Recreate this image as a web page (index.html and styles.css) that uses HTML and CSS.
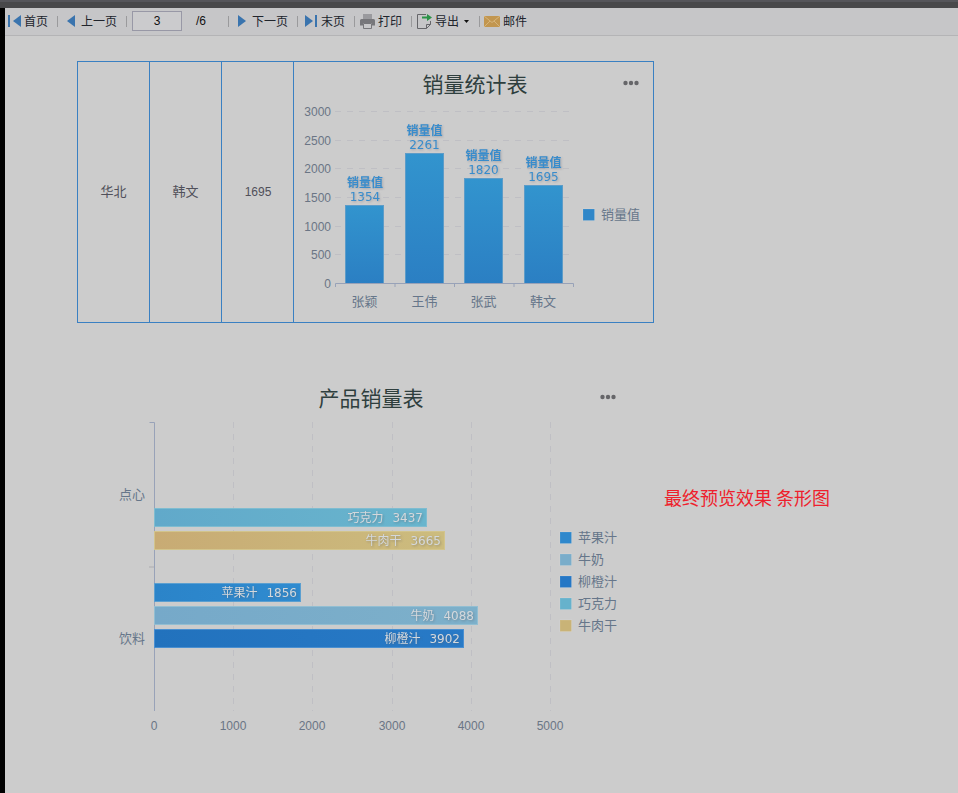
FILE: index.html
```html
<!DOCTYPE html>
<html lang="zh">
<head>
<meta charset="utf-8">
<title>报表预览</title>
<link rel="stylesheet" href="styles.css">
</head>
<body>
<div class="topbar"></div>
<div class="app">
  <div class="strip"></div>
  <div class="content">
    <div class="toolbar">
      <div class="tool">
        <svg width="13" height="12" viewBox="0 0 13 12"><rect class="i-blue" x="0" y="0" width="2" height="12"/><path class="i-blue" d="M13 0V12L5 6Z"/></svg>
        <span>首页</span>
      </div>
      <i class="sep"></i>
      <div class="tool g9 g6">
        <svg width="8" height="12" viewBox="0 0 8 12"><path class="i-blue" d="M8 0V12L0 6Z"/></svg>
        <span>上一页</span>
      </div>
      <i class="sep"></i>
      <input class="page-input" value="3">
      <span class="page-total">/6</span>
      <i class="sep"></i>
      <div class="tool g9 g6">
        <svg width="8" height="12" viewBox="0 0 8 12"><path class="i-blue" d="M0 0V12L8 6Z"/></svg>
        <span>下一页</span>
      </div>
      <i class="sep"></i>
      <div class="tool g7 g4">
        <svg width="12" height="12" viewBox="0 0 12 12"><path class="i-blue" d="M0 0V12L8 6Z"/><rect class="i-blue" x="10" y="0" width="2" height="12"/></svg>
        <span>末页</span>
      </div>
      <i class="sep"></i>
      <div class="tool g5">
        <svg width="15" height="15" viewBox="0 0 15 15"><path class="i-gray" d="M3 0H12V5H3Z" fill-opacity=".55"/><path class="i-gray" d="M1.500 5H13.500A1.500 1.500 0 0 1 15 6.500V11.500H12V9H3V11.500H0V6.500A1.500 1.500 0 0 1 1.500 5Z"/><path class="i-gray-line" d="M3.500 9.500H11.500V14.500H3.500Z"/></svg>
        <span>打印</span>
      </div>
      <i class="sep"></i>
      <div class="tool g5">
        <svg width="15" height="16" viewBox="0 0 15 16"><path class="i-doc" d="M.5 1.500H9M13.500 8V11.500L9.500 15.500H.5V1.500M13.500 11.500H9.500V15.500"/><path class="i-green" d="M5 3.500H10V1L15 4.500L10 8V5.500H5Z"/></svg>
        <span>导出</span>
        <svg class="caret" width="5" height="3" viewBox="0 0 5 3"><path d="M0 0H5L2.500 3Z"/></svg>
      </div>
      <i class="sep"></i>
      <div class="tool g4-left">
        <svg width="16" height="11" viewBox="0 0 16 11"><rect class="i-mail" width="16" height="11"/><path class="i-mail-line" d="M0 0L8 6.500L16 0M0 11L6 5M16 11L10 5"/></svg>
        <span>邮件</span>
      </div>
    </div>

    <div class="report">
      <table class="grid">
        <tr>
          <td class="cell cjk">华北</td>
          <td class="cell cjk">韩文</td>
          <td class="cell num">1695</td>
          <td class="chart-cell">
            <svg class="chart" width="359" height="260" viewBox="294 62 359 260">
              <defs>
                <linearGradient id="barV" x1="0" y1="0" x2="0" y2="1"><stop offset="0" stop-color="#3294ce"/><stop offset="1" stop-color="#2b7fc3"/></linearGradient>
              </defs>
              <text class="title" x="475" y="92">销量统计表</text>
              <g class="dots"><circle cx="625.500" cy="83" r="2.200"/><circle cx="631" cy="83" r="2.200"/><circle cx="636.500" cy="83" r="2.200"/></g>

              <g class="grid-h">
                <path d="M335 111.500H573"/><path d="M335 140.500H573"/><path d="M335 168.500H573"/><path d="M335 197.500H573"/><path d="M335 226.500H573"/><path d="M335 254.500H573"/>
              </g>
              <g class="tick-label end">
                <text x="331" y="116">3000</text><text x="331" y="145">2500</text><text x="331" y="173">2000</text><text x="331" y="202">1500</text><text x="331" y="231">1000</text><text x="331" y="259">500</text><text x="331" y="288">0</text>
              </g>

              <g class="bar-v">
                <rect x="345.500" y="205.500" width="38" height="78"/>
                <rect x="405.500" y="153.500" width="38" height="130"/>
                <rect x="464.500" y="178.500" width="38" height="105"/>
                <rect x="524.500" y="185.500" width="38" height="98"/>
              </g>
              <path class="axis" d="M335.500 287V283.500H573.500V287M395 283.500V287M454.500 283.500V287M514 283.500V287"/>

              <g class="data-label">
                <text class="data-name" x="365" y="187">销量值</text><text class="data-num" x="365" y="201">1354</text>
                <text class="data-name" x="424.500" y="135">销量值</text><text class="data-num" x="424.500" y="149">2261</text>
                <text class="data-name" x="483.500" y="160">销量值</text><text class="data-num" x="483.500" y="174">1820</text>
                <text class="data-name" x="543.500" y="167">销量值</text><text class="data-num" x="543.500" y="181">1695</text>
              </g>
              <g class="cat-label middle">
                <text x="364.500" y="306">张颖</text><text x="424.500" y="306">王伟</text><text x="483.500" y="306">张武</text><text x="543" y="306">韩文</text>
              </g>
              <rect class="swatch" x="583" y="209" width="11.500" height="11.500" fill="#2f86c8"/>
              <text class="legend" x="601" y="219">销量值</text>
            </svg>
          </td>
        </tr>
      </table>

      <div class="lower">
        <svg class="chart" width="570" height="360" viewBox="77 380 570 360">
          <defs>
            <linearGradient id="b1" x1="0" y1="0" x2="1" y2="0"><stop offset="0" stop-color="#2b84c9"/><stop offset="1" stop-color="#2f8bd0"/></linearGradient>
            <linearGradient id="b2" x1="0" y1="0" x2="1" y2="0"><stop offset="0" stop-color="#76a9c9"/><stop offset="1" stop-color="#7db0ca"/></linearGradient>
            <linearGradient id="b3" x1="0" y1="0" x2="1" y2="0"><stop offset="0" stop-color="#2272bd"/><stop offset="1" stop-color="#287ac7"/></linearGradient>
            <linearGradient id="b4" x1="0" y1="0" x2="1" y2="0"><stop offset="0" stop-color="#61a9ca"/><stop offset="1" stop-color="#69b5cd"/></linearGradient>
            <linearGradient id="b5" x1="0" y1="0" x2="1" y2="0"><stop offset="0" stop-color="#c8ab74"/><stop offset="1" stop-color="#ccbc7e"/></linearGradient>
          </defs>
          <text class="title" x="371" y="406">产品销量表</text>
          <g class="dots"><circle cx="602.500" cy="397" r="2.200"/><circle cx="608" cy="397" r="2.200"/><circle cx="613.500" cy="397" r="2.200"/></g>

          <g class="grid-v">
            <path d="M233.500 422V711"/><path d="M312.500 422V711"/><path d="M392.500 422V711"/><path d="M471.500 422V711"/><path d="M550.500 422V711"/>
          </g>
          <path class="axis" d="M149.500 422.500H154.500V711"/>
          <path class="axis-faint" d="M149 567H154"/>

          <rect x="154.500" y="508.500" width="272" height="18" fill="url(#b4)" stroke="#7fbcd0"/>
          <rect x="154.500" y="531.500" width="290" height="18" fill="url(#b5)" stroke="#d2c48c"/>
          <rect x="154.500" y="583.500" width="146" height="18" fill="url(#b1)" stroke="#5b9fd0"/>
          <rect x="154.500" y="606.500" width="323" height="18" fill="url(#b2)" stroke="#92bed2"/>
          <rect x="154.500" y="629.500" width="309" height="18" fill="url(#b3)" stroke="#4a8fd0"/>

          <g class="bar-label">
            <text x="423" y="522"><tspan>巧克力</tspan><tspan class="bar-num" dx="9">3437</tspan></text>
            <text x="441" y="545"><tspan>牛肉干</tspan><tspan class="bar-num" dx="9">3665</tspan></text>
            <text x="297" y="597"><tspan>苹果汁</tspan><tspan class="bar-num" dx="9">1856</tspan></text>
            <text x="474" y="620"><tspan>牛奶</tspan><tspan class="bar-num" dx="9">4088</tspan></text>
            <text x="460" y="643"><tspan>柳橙汁</tspan><tspan class="bar-num" dx="9">3902</tspan></text>
          </g>

          <g class="cat-label">
            <text x="119" y="499">点心</text><text x="119" y="643">饮料</text>
          </g>
          <g class="tick-label middle">
            <text x="154" y="730">0</text><text x="233" y="730">1000</text><text x="312" y="730">2000</text><text x="392" y="730">3000</text><text x="471" y="730">4000</text><text x="550" y="730">5000</text>
          </g>

          <rect class="swatch" x="560" y="532" width="11.500" height="11.500" fill="#2f88cc"/>
          <rect class="swatch" x="560" y="554" width="11.500" height="11.500" fill="#7aadca"/>
          <rect class="swatch" x="560" y="576" width="11.500" height="11.500" fill="#2577c5"/>
          <rect class="swatch" x="560" y="598" width="11.500" height="11.500" fill="#66b2cc"/>
          <rect class="swatch" x="560" y="620" width="11.500" height="11.500" fill="#c9b377"/>
          <text class="legend" x="578" y="541.500">苹果汁</text>
          <text class="legend" x="578" y="563.500">牛奶</text>
          <text class="legend" x="578" y="585.500">柳橙汁</text>
          <text class="legend" x="578" y="607.500">巧克力</text>
          <text class="legend" x="578" y="629.500">牛肉干</text>
        </svg>
        <div class="note">最终预览效果 条形图</div>
      </div>
    </div>
  </div>
</div>
</body>
</html>
```

FILE: styles.css
```css
* { box-sizing: border-box; }
html, body { height: 100%; }
body {
  margin: 0;
  background: #cccccc;
  font-family: "Noto Sans CJK SC", "Liberation Sans", sans-serif;
  overflow: hidden;
}
.topbar {
  height: 8px;
  background: #48484a;
  border-top: 2px solid #55555a;
}
.app { display: flex; height: 785px; }
.strip { width: 5px; flex: none; background: #000; }
.content { flex: 1; min-width: 0; }

.toolbar {
  height: 28px;
  padding: 0 0 1px 3px;
  display: flex;
  align-items: center;
  background: #c6c6c8;
  border-bottom: 1px solid #b4b4b6;
  font-size: 12px;
  color: #20242c;
}
.tool { display: flex; align-items: center; gap: 3px; flex: none; }
.tool span { line-height: 16px; }
.g9 { margin-left: 9px; }
.g7 { margin-left: 7px; }
.g5 { margin-left: 5px; }
.g4-left { margin-left: 4px; }
.g6 { gap: 6px; }
.g4 { gap: 4px; }
.caret { margin: 0 1px 0 2px; fill: #111; }
.sep { width: 1px; height: 11px; margin-left: 9px; background: #9a9a9c; flex: none; }
.page-input {
  width: 50px;
  height: 20px;
  margin-left: 5px;
  padding: 0;
  border: 1px solid #9898a6;
  background: #cbcbcd;
  text-align: center;
  font: 12px "Liberation Sans", sans-serif;
  color: #111;
}
.page-total {
  margin: 0 12px 0 14px;
  width: 11px;
  font: 12px "Liberation Sans", sans-serif;
  color: #111;
}
.i-blue { fill: #3a74ae; }
.i-gray { fill: #77777b; }
.i-gray-line { fill: #c8c8ca; stroke: #77777b; }
.i-doc { fill: none; stroke: #66666a; }
.i-green { fill: #2b9348; }
.i-mail { fill: #c2964f; }
.i-mail-line { fill: none; stroke: #d6b57c; stroke-width: 1; }

.report { padding: 25px 0 0 72px; }
.grid {
  border-collapse: collapse;
  width: 577px;
  height: 262px;
  table-layout: fixed;
}
.grid td { border: 1px solid #3a80c2; padding: 0; }
.grid .cell {
  width: 72px;
  text-align: center;
  vertical-align: middle;
  color: #50505a;
  padding-bottom: 4px;
}
.cjk { font-size: 13px; }
.num { font: 12px "Liberation Sans", sans-serif; }
.grid .num { padding-left: 1px; padding-bottom: 1px; }
.chart-cell { vertical-align: top; line-height: 0; }
.chart { display: block; flex: none; }

.title { font-size: 21px; fill: #2f3f3e; text-anchor: middle; }
.dots { fill: #666669; }
.grid-h path, .grid-v path { fill: none; stroke: #bfbfc4; stroke-dasharray: 6 6; }
.axis { fill: none; stroke: #98a2b8; }
.axis-faint { fill: none; stroke: #bcbcbe; stroke-width: 2; }
.tick-label { font: 12px "Liberation Sans", sans-serif; fill: #6a7585; }
.end { text-anchor: end; }
.middle { text-anchor: middle; }
.bar-v rect { fill: url(#barV); stroke: #5d9cc8; }
.data-label { text-anchor: middle; fill: #388ccc; filter: drop-shadow(1px 1px 1px rgba(120,120,130,.45)); }
.data-name { font-size: 12px; font-weight: 700; }
.data-num { font: 12px "DejaVu Sans", sans-serif; }
.cat-label { font-size: 13px; fill: #66768a; }
.middle.cat-label { text-anchor: middle; }
.legend { font-size: 13px; fill: #66768a; }
.swatch { stroke: rgba(255,255,255,.12); }
.bar-label { font-size: 12px; fill: #d4d8dc; text-anchor: end; filter: drop-shadow(1px 1px 1px rgba(90,90,100,.45)); }
.bar-num { font: 12px "DejaVu Sans", sans-serif; }

.lower { display: flex; align-items: flex-start; margin-top: 57px; }
.note {
  margin: 105px 0 0 17px;
  font-size: 18px;
  line-height: 24px;
  white-space: nowrap;
  color: #ee1f2d;
}
```
